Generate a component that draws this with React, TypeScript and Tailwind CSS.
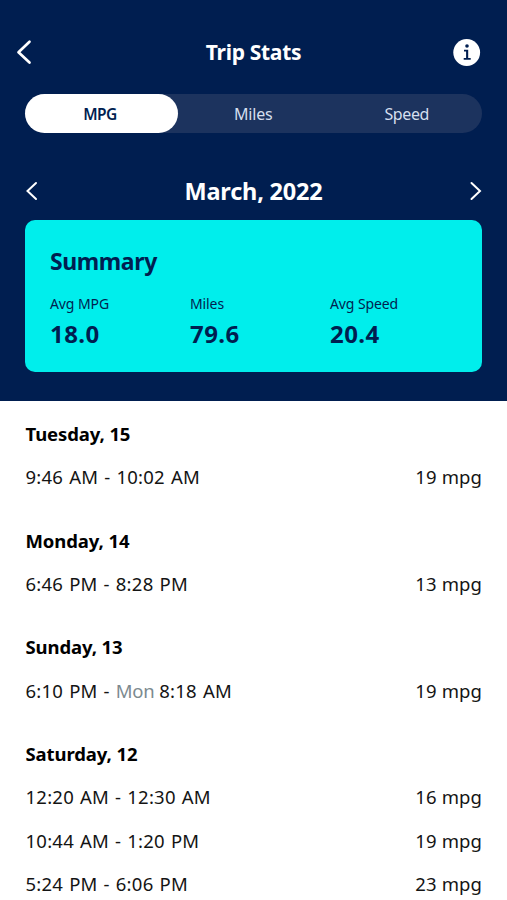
import clsx from 'clsx';

type Trip = {
  start: string;
  endDay?: string;
  end: string;
  value: string;
};

type Day = {
  label: string;
  trips: Trip[];
};

const tabs = ['MPG', 'Miles', 'Speed'];

const summary = [
  { label: 'Avg MPG', value: '18.0' },
  { label: 'Miles', value: '79.6' },
  { label: 'Avg Speed', value: '20.4' },
];

const days: Day[] = [
  {
    label: 'Tuesday, 15',
    trips: [{ start: '9:46 AM', end: '10:02 AM', value: '19 mpg' }],
  },
  {
    label: 'Monday, 14',
    trips: [{ start: '6:46 PM', end: '8:28 PM', value: '13 mpg' }],
  },
  {
    label: 'Sunday, 13',
    trips: [{ start: '6:10 PM', endDay: 'Mon', end: '8:18 AM', value: '19 mpg' }],
  },
  {
    label: 'Saturday, 12',
    trips: [
      { start: '12:20 AM', end: '12:30 AM', value: '16 mpg' },
      { start: '10:44 AM', end: '1:20 PM', value: '19 mpg' },
      { start: '5:24 PM', end: '6:06 PM', value: '23 mpg' },
    ],
  },
];

function InfoIcon() {
  return (
    <svg width="28" height="28" viewBox="0 0 28 28">
      <circle cx="13.7" cy="14.5" r="13.4" fill="#fff" />
      <circle cx="14" cy="8" r="1.8" fill="#001e50" />
      <path d="M11 11.8h4.200v8.200h2.500v1.800h-7v-1.800h2.400v-6.400h-2.100z" fill="#001e50" />
    </svg>
  );
}

export default function App() {
  return (
    <div className="flex h-[900px] w-[507px] flex-col overflow-hidden bg-white font-['Noto_Sans',sans-serif]">
      <div className="flex h-[401px] shrink-0 flex-col bg-[#001e50] pt-8 text-white">
        <header className="flex h-10 items-center justify-between pr-[26px] pl-4">
          <button className="w-7">
            <svg width="16" height="26" viewBox="0 0 16 26" fill="none" stroke="#fff" strokeWidth="2.7">
              <path d="M13.5 2.8 2.5 13.2l11 10.3" strokeLinecap="round" strokeLinejoin="round" />
            </svg>
          </button>
          <h1 className="pt-0.5 pl-[10px] text-[21px] font-bold tracking-[-0.3px]">Trip Stats</h1>
          <button>
            <InfoIcon />
          </button>
        </header>

        <div className="mx-[25px] mt-[22px] flex h-[39px] rounded-full bg-[#1c335e]">
          {tabs.map((tab, i) => (
            <button
              key={tab}
              className={clsx(
                'h-full rounded-full text-base',
                i === 0
                  ? 'w-[153px] bg-white pt-0.5 pr-[3px] text-[15.5px] font-semibold tracking-[-0.6px] text-[#001e50]'
                  : 'flex-1 text-[#d5dfee]',
                i === 1 && 'tracking-[-0.2px]',
                i === 2 && 'pl-[3px] tracking-[-0.4px]',
              )}
            >
              {tab}
            </button>
          ))}
        </div>

        <div className="mt-10 flex h-9 items-center justify-between px-[25px]">
          <svg width="14" height="20" viewBox="0 0 14 20" fill="none" stroke="#fff" strokeWidth="2">
            <path d="M11 2 2.5 10 11 18" strokeLinecap="round" />
          </svg>
          <h2 className="pt-0.5 text-[23.5px] font-bold tracking-[-0.2px]">March, 2022</h2>
          <svg width="14" height="20" viewBox="0 0 14 20" fill="none" stroke="#fff" strokeWidth="2">
            <path d="M3.5 2 12 10l-8.5 8" strokeLinecap="round" />
          </svg>
        </div>

        <section className="mx-[25px] mt-[11px] h-[152px] rounded-[10px] bg-[#00eeec] px-[25px] pt-[23px] text-[#001e50]">
          <h3 className="text-[23px] leading-9 font-bold tracking-[-0.4px]">Summary</h3>
          <div className="mt-[15px] flex">
            {summary.map((item) => (
              <div key={item.label} className="w-[140px] shrink-0">
                <p className="text-sm leading-5 tracking-[-0.1px]">{item.label}</p>
                <p className="mt-1 text-2xl leading-8 font-bold tracking-[0.4px]">{item.value}</p>
              </div>
            ))}
          </div>
        </section>
      </div>

      <main className="px-[25px] pt-[11px] text-[#141414]">
        {days.map((day) => (
          <section key={day.label} className="mb-[19.7px]">
            <h4 className="flex h-[43.5px] items-center pl-[0.5px] text-[18.5px] font-bold tracking-[-0.1px] text-black">
              {day.label}
            </h4>
            {day.trips.map((trip) => (
              <div key={trip.start} className="flex h-[43.5px] items-center justify-between text-[18.5px]">
                <span className="pl-[0.5px] tracking-[0.25px] [word-spacing:0.9px]">
                  {trip.start} -{' '}
                  {trip.endDay && (
                    <span className="tracking-[-0.2px] text-[#7c8a8f] [word-spacing:0px]">{trip.endDay} </span>
                  )}
                  {trip.end}
                </span>
                <span className="tracking-[0.1px]">{trip.value}</span>
              </div>
            ))}
          </section>
        ))}
      </main>
    </div>
  );
}
